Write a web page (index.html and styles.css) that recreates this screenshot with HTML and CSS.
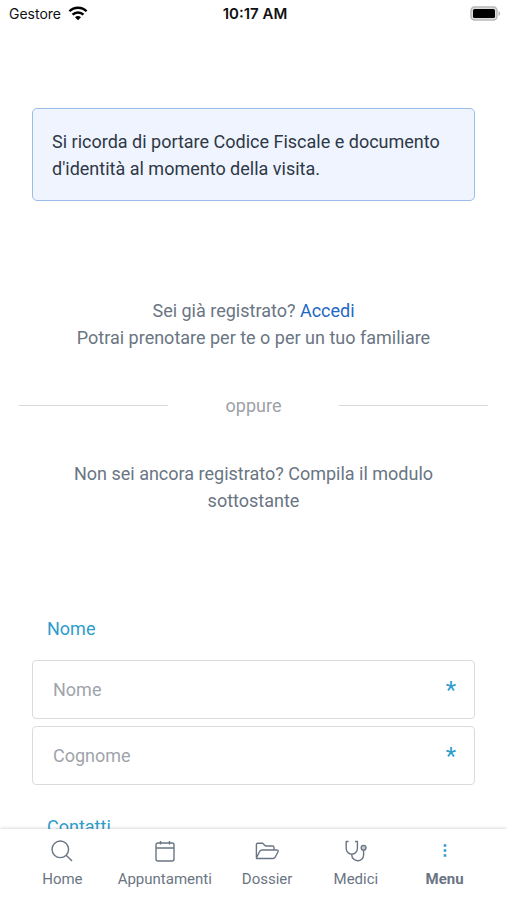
FILE: index.html
```html
<!DOCTYPE html>
<html lang="it">
<head>
<meta charset="utf-8">
<meta name="viewport" content="width=device-width, initial-scale=1">
<title>Registrazione</title>
<link rel="stylesheet" href="styles.css">
</head>
<body>
<header class="status">
  <div class="carrier">
    <span>Gestore</span>
    <svg width="20" height="15" viewBox="0 0 18 14" fill="none" stroke="#000" stroke-width="2.3" aria-hidden="true">
      <path d="M1 4.9C5.4.5 12.6.5 17 4.9"/>
      <path d="M3.9 8C6.7 5.3 11.3 5.3 14.1 8"/>
      <path d="M6.2 10.5C7.8 9 10.2 9 11.8 10.5L9 13.3Z" fill="#000" stroke="none"/>
    </svg>
  </div>
  <time class="clock">10:17 AM</time>
  <svg class="battery" width="31" height="15" viewBox="0 0 31 15" aria-hidden="true">
    <rect x="1" y="1" width="26" height="13" rx="3.5" fill="#ddd" stroke="#b9b9b9" stroke-width="1.5"/>
    <rect x="3" y="3" width="22" height="9" rx="1.5" fill="#000"/>
    <path d="M28.5 5.2C30.8 5.8 30.8 9.2 28.5 9.8Z" fill="#b5b5b5"/>
  </svg>
</header>

<main class="content">
  <p class="notice">Si ricorda di portare Codice Fiscale e documento d'identità al momento della visita.</p>

  <p class="intro">Sei già registrato? <a href="#accedi">Accedi</a><br>Potrai prenotare per te o per un tuo familiare</p>

  <div class="divider"><span>oppure</span></div>

  <p class="intro">Non sei ancora registrato? Compila il modulo sottostante</p>

  <form class="form">
    <h2 class="legend">Nome</h2>
    <label class="field">
      <input type="text" placeholder="Nome" aria-label="Nome" required>
      <span class="required" aria-hidden="true">*</span>
    </label>
    <label class="field">
      <input type="text" placeholder="Cognome" aria-label="Cognome" required>
      <span class="required" aria-hidden="true">*</span>
    </label>
    <h2 class="legend">Contatti</h2>
  </form>
</main>

<nav class="tabs">
  <a href="#home">
    <svg width="24" height="24" viewBox="0 0 24 24" aria-hidden="true"><circle cx="10.3" cy="10.3" r="8.3"/><path d="M16.2 16.2L22 22"/></svg>
    Home
  </a>
  <a href="#appuntamenti">
    <svg width="24" height="24" viewBox="0 0 24 24" aria-hidden="true"><rect x="3" y="4" width="18" height="18" rx="2"/><path d="M3 9H21M7.500 2V5.500M16.500 2V5.500"/></svg>
    Appuntamenti
  </a>
  <a href="#dossier">
    <svg width="26" height="24" viewBox="0 0 26 24" aria-hidden="true"><path d="M2.400 19V5.500Q2.400 4.200 3.700 4.200H8.700L11.500 7H18.500Q20 7 20 8.500V11M2.400 19L5.700 12.300Q6.400 11 8 11H22.700Q24.800 11 24 12.700L21.200 18.200Q20.500 19.500 19 19.500H3Q2.400 19.500 2.400 19Z"/></svg>
    Dossier
  </a>
  <a href="#medici">
    <svg width="24" height="24" viewBox="0 0 24 24" aria-hidden="true"><path d="M4.500 2.500H2.200V9.500A5.600 5.600 0 0 0 13.400 9.500V2.500H11.100M7.800 15.100V16.200A5.700 5.700 0 0 0 13.500 21.700A5.800 5.800 0 0 0 19.600 16V11.200"/><circle cx="19.600" cy="8.800" r="2.400" fill="#c8ccd2"/></svg>
    Medici
  </a>
  <a class="active" href="#menu" aria-current="page">
    <svg width="24" height="24" viewBox="0 0 24 24" aria-hidden="true"><path d="M10.700 5.200h2.600v2.600h-2.600zM10.700 10.200h2.600v2.600h-2.600zM10.700 15.200h2.600v2.600h-2.600z"/></svg>
    Menu
  </a>
</nav>
</body>
</html>
```

FILE: styles.css
```css
* {
  box-sizing: border-box;
}

body {
  margin: 0;
  height: 100vh;
  display: flex;
  flex-direction: column;
  overflow: hidden;
  background: #fff;
  color: #6a7583;
  font: 18px/27px Roboto, "Liberation Sans", sans-serif;
}

.status {
  display: grid;
  grid-template-columns: 1fr auto 1fr;
  align-items: center;
  height: 27px;
  padding: 0 6px 0 9px;
  flex: none;
  color: #111;
  font: 14px/20px Inter, sans-serif;
}

.carrier {
  display: flex;
  align-items: center;
  gap: 7px;
}

.clock {
  font-size: 15px;
  font-weight: 600;
}

.battery {
  justify-self: end;
}

.content {
  flex: 1;
  min-height: 0;
  overflow: hidden;
  padding-top: 81px;
}

.notice {
  margin: 0 32px 96px;
  padding: 19px 19px 18px;
  border: 1px solid #9dbde9;
  border-radius: 5px;
  background: #eff4fe;
  color: #2e3846;
}

.intro {
  margin: 0 64px;
  text-align: center;
}

.intro a {
  color: #1f68c6;
  text-decoration: none;
}

.divider {
  display: flex;
  align-items: center;
  gap: 58px;
  margin: 41px 19px;
  color: #9ca1a8;
}

.divider::before,
.divider::after {
  content: "";
  flex: 1;
  height: 1px;
  background: #d6d9dc;
}

.form {
  margin: 101px 32px 0;
}

.legend {
  margin: 0 0 18px 15px;
  color: #2e9dcc;
  font-size: 18px;
  font-weight: 400;
  line-height: 27px;
}

.field {
  display: flex;
  align-items: center;
  height: 59px;
  margin-bottom: 7px;
  padding: 0 18px 0 20px;
  border: 1px solid #d9dbde;
  border-radius: 4px;
}

.field input {
  flex: 1;
  min-width: 0;
  padding: 0;
  border: 0;
  outline: 0;
  background: none;
  color: #2e3846;
  font: inherit;
}

.field input::placeholder {
  color: #a0a4aa;
  opacity: 1;
}

.required {
  color: #2e9dcc;
  font-size: 24px;
  line-height: 16px;
}

.field + .legend {
  margin-top: 28px;
}

.tabs {
  position: relative;
  display: grid;
  grid-template-columns: 1fr 116px 1fr 1fr 1fr;
  flex: none;
  height: 71px;
  padding: 10px 18px 0;
  background: #fff;
  box-shadow: 0 -1px 3px rgba(0, 0, 0, 0.14);
}

.tabs a {
  display: flex;
  flex-direction: column;
  align-items: center;
  gap: 6px;
  color: #6a7583;
  font-size: 15px;
  line-height: 20px;
  text-decoration: none;
}

.tabs svg {
  fill: none;
  stroke: #6a7583;
  stroke-width: 1.4;
  stroke-linejoin: round;
}

.tabs .active {
  font-weight: 700;
}

.tabs .active svg {
  fill: #2e9dcc;
  stroke: none;
}
```
